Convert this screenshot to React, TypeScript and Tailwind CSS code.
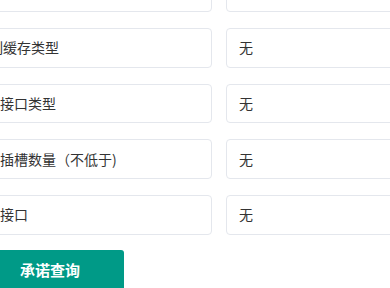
import React from "react";

const rows: { label: string; value: string }[] = [
  { label: "内存类型", value: "无" },
  { label: "阵列缓存类型", value: "无" },
  { label: "接口类型", value: "无" },
  { label: "插槽数量（不低于)", value: "无" },
  { label: "接口", value: "无" },
];

export default function App() {
  return (
    <div
      className="relative w-[390px] h-[288px] overflow-hidden bg-white text-[14px] text-[#333333]"
      style={{ fontFamily: '"Noto Sans CJK SC", "Noto Sans", sans-serif' }}
    >
      <div className="ml-[-12px] mt-[-27.67px] flex flex-col gap-4 w-[460px]">
        {rows.map((r, i) => (
          <div key={i} className="flex gap-[14px]">
            <div className="w-[224px] h-[39.67px] shrink-0 flex items-center pl-[11px] border border-[#e4e7ed] rounded-[4px] whitespace-nowrap overflow-hidden">
              <span className={i === 1 ? "ml-[-25px]" : ""}>{i === 0 ? "" : r.label}</span>
            </div>
            <div className="w-[224px] h-[39.67px] shrink-0 flex items-center pl-3 border border-[#e4e7ed] rounded-[4px]">
              {i === 0 ? "" : r.value}
            </div>
          </div>
        ))}
        <div className="mt-[-0.5px]">
          <button className="w-[136px] h-10 pl-8 text-left bg-[#009a87] text-white font-bold rounded-[3px] text-[15px]">
            承诺查询
          </button>
        </div>
      </div>
    </div>
  );
}
